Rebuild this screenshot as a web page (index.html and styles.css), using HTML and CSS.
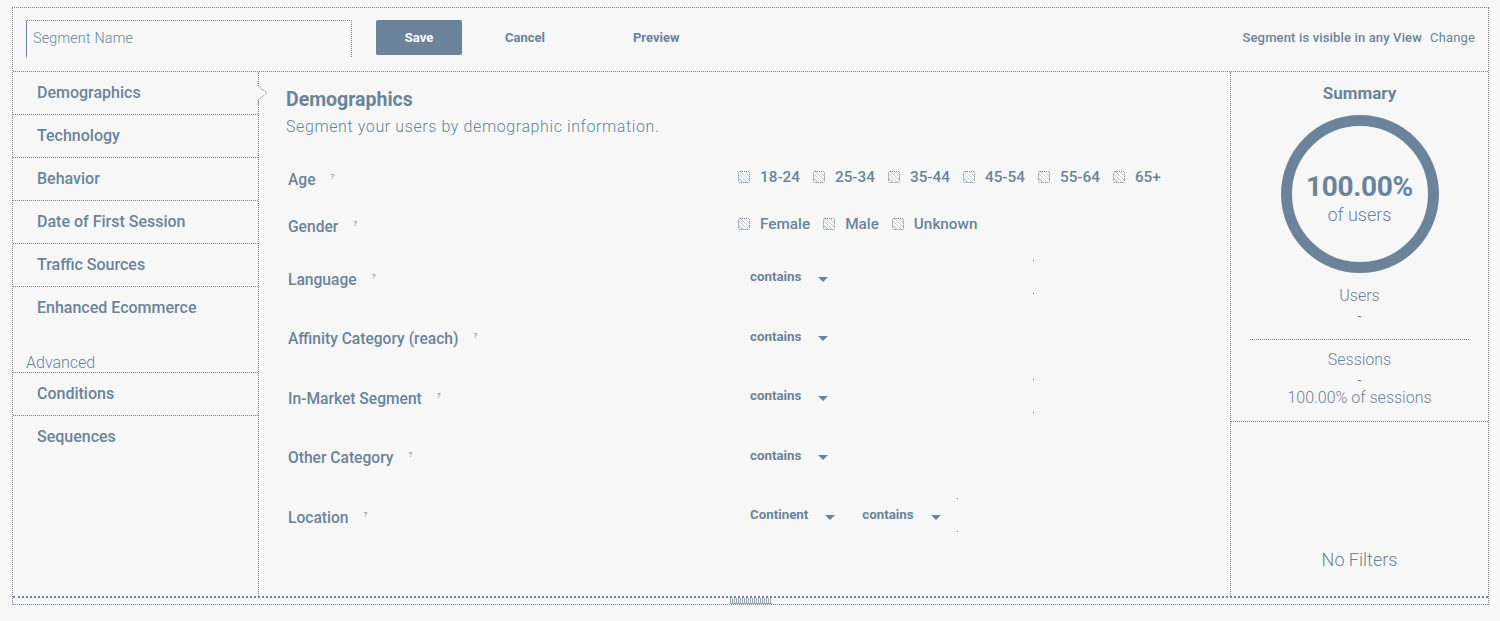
FILE: index.html
```html
<!DOCTYPE html>
<html>
<head>
<meta charset="utf-8">
<link rel="stylesheet" href="styles.css">
</head>
<body>
<div class="frame">
  <div class="topbar">
    <div class="name-input">Segment Name</div>
    <div class="btn-save">Save</div>
    <div class="btn-link cancel">Cancel</div>
    <div class="btn-link preview">Preview</div>
    <div class="visibility"><span class="vis-strong">Segment is visible in any View</span><span class="vis-change">Change</span></div>
  </div>
  <div class="body">
    <div class="nav">
      <div class="nav-item active">Demographics
        <svg class="notch" width="12" height="24" viewBox="0 0 12 24"><path d="M1 0 L1 5 L10 12 L1 19 L1 24" fill="#f7f7f7" stroke="#6b849b" stroke-width="1" stroke-dasharray="1 1"/></svg>
      </div>
      <div class="nav-item">Technology</div>
      <div class="nav-item">Behavior</div>
      <div class="nav-item">Date of First Session</div>
      <div class="nav-item">Traffic Sources</div>
      <div class="nav-item noline">Enhanced Ecommerce</div>
      <div class="nav-group">Advanced</div>
      <div class="nav-item">Conditions</div>
      <div class="nav-item noline">Sequences</div>
    </div>
    <div class="main">
      <h1 class="title">Demographics</h1>
      <p class="subtitle">Segment your users by demographic information.</p>
      <div class="rows">
        <div class="row short">
          <div class="label">Age<span class="help">?</span></div>
          <div class="checks">
            <span class="opt"><span class="box"></span>18-24</span>
            <span class="opt"><span class="box"></span>25-34</span>
            <span class="opt"><span class="box"></span>35-44</span>
            <span class="opt"><span class="box"></span>45-54</span>
            <span class="opt"><span class="box"></span>55-64</span>
            <span class="opt"><span class="box"></span>65+</span>
          </div>
        </div>
        <div class="row short">
          <div class="label">Gender<span class="help">?</span></div>
          <div class="checks">
            <span class="opt"><span class="box"></span>Female</span>
            <span class="opt"><span class="box"></span>Male</span>
            <span class="opt"><span class="box"></span>Unknown</span>
          </div>
        </div>
        <div class="row tall">
          <div class="label">Language<span class="help">?</span></div>
          <div class="drops"><span class="drop">contains<span class="caret"></span></span><span class="field"></span></div>
        </div>
        <div class="row tall">
          <div class="label">Affinity Category (reach)<span class="help">?</span></div>
          <div class="drops"><span class="drop">contains<span class="caret"></span></span></div>
        </div>
        <div class="row tall">
          <div class="label">In-Market Segment<span class="help">?</span></div>
          <div class="drops"><span class="drop">contains<span class="caret"></span></span><span class="field"></span></div>
        </div>
        <div class="row tall">
          <div class="label">Other Category<span class="help">?</span></div>
          <div class="drops"><span class="drop">contains<span class="caret"></span></span></div>
        </div>
        <div class="row tall">
          <div class="label">Location<span class="help">?</span></div>
          <div class="drops"><span class="drop">Continent<span class="caret"></span></span><span class="drop second">contains<span class="caret"></span></span><span class="field short-field"></span></div>
        </div>
      </div>
    </div>
    <div class="summary">
      <div class="sum-top">
        <div class="sum-title">Summary</div>
        <div class="ring">
          <svg width="158" height="158" viewBox="0 0 158 158"><circle cx="79" cy="79" r="73.5" fill="none" stroke="#6b849b" stroke-width="11"/></svg>
          <div class="ring-text"><div class="ring-pct">100.00%</div><div class="ring-sub">of users</div></div>
        </div>
        <div class="stat">Users</div>
        <div class="dash">-</div>
        <div class="sep"></div>
        <div class="stat">Sessions</div>
        <div class="dash">-</div>
        <div class="stat">100.00% of sessions</div>
      </div>
      <div class="sum-bottom">No Filters</div>
    </div>
  </div>
  <div class="footer"><span class="handle"></span></div>
</div>
</body>
</html>
```
FILE: styles.css
```css
* { box-sizing: border-box; }
html, body { margin: 0; padding: 0; background: #f7f7f7; }
body { font-family: Roboto, "Liberation Sans", sans-serif; color: #6b849b; }

.frame {
  margin: 7px 12px 0 12px;
  width: 1477px;
  border: 1px dotted #6b849b;
  border-bottom: none;
}

.topbar {
  height: 64px;
  border-bottom: 1px dotted #6b849b;
  display: flex;
  align-items: flex-start;
  padding: 12px 13px 0 13px;
}
.name-input {
  width: 326px;
  height: 37px;
  border-left: 1px solid #6b849b;
  border-top: 1px dotted #6b849b;
  border-right: 1px dotted #6b849b;
  font-size: 14.3px;
  font-weight: 300;
  padding: 9px 0 0 6px;
  letter-spacing: 0.2px;
}
.btn-save {
  margin-left: 24px;
  width: 86px;
  height: 35px;
  background: #6b849b;
  color: #ffffff;
  font-size: 13px;
  font-weight: 700;
  border-radius: 2px;
  display: flex;
  align-items: center;
  justify-content: center;
}
.btn-link {
  font-size: 13px;
  font-weight: 700;
  height: 35px;
  display: flex;
  align-items: center;
}
.cancel { margin-left: 43px; }
.preview { margin-left: 88px; }
.visibility {
  margin-left: auto;
  height: 35px;
  display: flex;
  align-items: center;
  font-size: 13px;
  letter-spacing: 0.15px;
}
.vis-strong { font-weight: 500; }
.vis-change { margin-left: 8px; font-weight: 400; }

.body {
  display: flex;
  height: 526px;
  border-bottom: 2px dotted #6b849b;
}

.nav {
  width: 246px;
  border-right: 1px dotted #6b849b;
  flex: none;
}
.nav-item {
  position: relative;
  height: 43px;
  border-bottom: 1px dotted #6b849b;
  padding-left: 24px;
  padding-bottom: 2px;
  font-size: 16px;
  font-weight: 500;
  display: flex;
  align-items: center;
}
.nav-item.noline { border-bottom: none; }
.notch {
  position: absolute;
  right: -11px;
  top: 9px;
}
.nav-group {
  height: 43px;
  border-bottom: 1px dotted #6b849b;
  font-size: 16px;
  font-weight: 300;
  padding: 26px 0 0 13px;
  line-height: 14px;
}

.main {
  flex: 1;
  border-right: 1px dotted #6b849b;
  padding: 17px 0 0 27px;
}
.title {
  margin: 0;
  font-size: 19.5px;
  font-weight: 700;
  line-height: 22px;
}
.subtitle {
  margin: 7px 0 0 0;
  font-size: 16px;
  font-weight: 300;
  line-height: 18px;
  letter-spacing: 0.6px;
}
.rows { margin-top: 17px; padding-left: 2px; }
.row {
  display: flex;
  align-items: center;
}
.row.short { height: 47px; }
.row.tall { height: 59.5px; }
.label {
  width: 450px;
  flex: none;
  font-size: 15.6px;
  font-weight: 500;
  padding-top: 6px;
}
.help {
  font-size: 8px;
  font-weight: 400;
  vertical-align: 6px;
  margin-left: 15px;
}
.checks { display: flex; align-items: center; font-size: 15.3px; font-weight: 500; }
.opt { display: flex; align-items: center; margin-right: 13px; }
.box {
  width: 12px;
  height: 12px;
  border: 1px dotted #6b849b;
  border-radius: 2px;
  margin-right: 10px;
  background: repeating-linear-gradient(45deg, transparent 0 2px, rgba(107,132,155,0.35) 2px 3px);
}
.drops { display: flex; align-items: center; padding-left: 12px; position: relative; height: 34px; }
.drop {
  font-size: 13.3px;
  font-weight: 700;
  display: flex;
  align-items: center;
}
.drop.second { margin-left: 27px; }
.caret {
  width: 0;
  height: 0;
  border-left: 5px solid transparent;
  border-right: 5px solid transparent;
  border-top: 5px solid #6b849b;
  margin-left: 17px;
  margin-top: 5px;
}
.field {
  position: absolute;
  left: 295px;
  top: 0;
  width: 1px;
  height: 34px;
  border-top: 1px dotted #6b849b;
  border-bottom: 1px dotted #6b849b;
}
.field.short-field { left: 219px; }

.summary {
  width: 257px;
  flex: none;
  display: flex;
  flex-direction: column;
}
.sum-top {
  border-bottom: 1px dotted #6b849b;
  padding: 12px 0 14px 0;
  display: flex;
  flex-direction: column;
  align-items: center;
}
.sum-title { font-size: 17px; font-weight: 700; line-height: 18px; }
.ring {
  position: relative;
  width: 158px;
  height: 158px;
  margin-top: 13px;
}
.ring svg { display: block; }
.ring-text {
  position: absolute;
  inset: 0;
  display: flex;
  flex-direction: column;
  align-items: center;
  justify-content: center;
  padding-top: 8px;
}
.ring-pct { font-size: 28px; font-weight: 700; line-height: 30px; letter-spacing: -0.3px; }
.ring-sub { font-size: 18px; font-weight: 300; line-height: 20px; margin-top: 3px; }
.stat { font-size: 16px; font-weight: 300; line-height: 18px; }
.sum-top .ring + .stat { margin-top: 14px; }
.dash { font-size: 14px; line-height: 18px; margin-top: 2px; }
.sep {
  width: 219px;
  border-top: 1px dotted #6b849b;
  margin: 14px 0 11px 0;
}
.sum-bottom {
  flex: 1;
  display: flex;
  align-items: flex-end;
  justify-content: center;
  font-size: 18px;
  font-weight: 300;
  padding-bottom: 26px;
}

.footer {
  height: 7px;
  border-bottom: 1px dotted #6b849b;
  display: flex;
  justify-content: center;
}
.handle {
  width: 42px;
  height: 6px;
  border-bottom: 1px dotted #6b849b;
  background: repeating-linear-gradient(90deg, #6b849b 0 1px, transparent 1px 2px);
  opacity: 0.7;
}
```
